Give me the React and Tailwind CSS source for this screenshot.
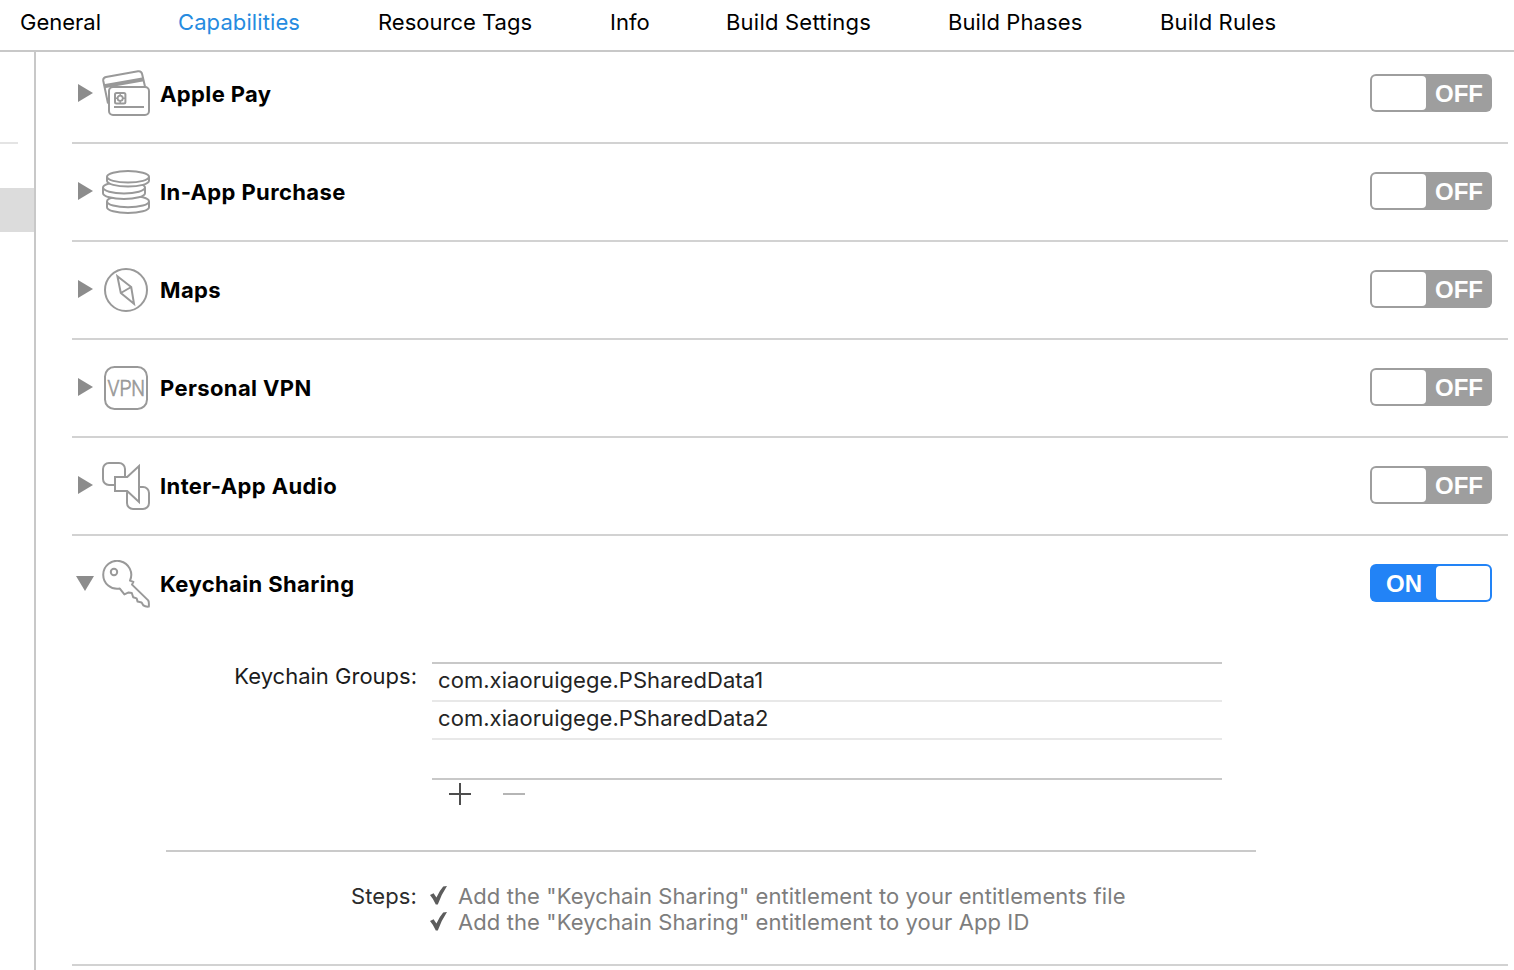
const tabs = [
  { label: "General", cls: "w-[158px] text-black" },
  { label: "Capabilities", cls: "w-[200px] text-[#268be0] tracking-[0.1px]" },
  { label: "Resource Tags", cls: "w-[232px] text-black" },
  { label: "Info", cls: "w-[116px] text-black" },
  { label: "Build Settings", cls: "w-[222px] text-black tracking-[0.22px]" },
  { label: "Build Phases", cls: "w-[212px] text-black tracking-[0.1px]" },
  { label: "Build Rules", cls: "w-[200px] text-black tracking-[0.15px]" },
];

function Icon({ children }) {
  return (
    <svg className="size-12 shrink-0" viewBox="0 0 48 48" fill="none" stroke="#999999" strokeWidth="2">
      {children}
    </svg>
  );
}

function CardsIcon() {
  return (
    <Icon>
      <path d="M6 33.5 L1.3 11 Q0.7 7.6 4 6.9 L36 1.3 Q39.4 0.8 40.1 4 L43 16.5" />
      <path d="M2 16.2 L41.8 9.2" strokeWidth="4" />
      <rect x="7" y="17" width="40" height="28" rx="4" fill="#fff" />
      <rect x="13" y="23" width="10.4" height="10.4" rx="1.5" />
      <circle cx="18.2" cy="28.2" r="2.6" strokeWidth="1.8" />
      <path d="M18.2 23v3M18.2 30.5v3M13 28.2h3M20.6 28.2h3" strokeWidth="1.4" />
      <path d="M12 37h30" />
    </Icon>
  );
}

function Coin({ cx, cy, depth }) {
  return (
    <g fill="#fff">
      <path d={`M${cx - 21} ${cy}v${depth}a21 5.8 0 0 0 42 0v${-depth}`} />
      <ellipse cx={cx} cy={cy} rx="21" ry="5.8" />
    </g>
  );
}

function CoinsIcon() {
  return (
    <Icon>
      <Coin cx={26} cy={33.4} depth={5.8} />
      <Coin cx={22} cy={19.6} depth={5.6} />
      <Coin cx={26} cy={8.8} depth={4} />
    </Icon>
  );
}

function CompassIcon() {
  return (
    <Icon>
      <circle cx="24" cy="24" r="21" />
      <path d="M15.4 10.2 L29.2 21 L32 37.8 L18.8 27 Z M18.8 27 L29.2 21" />
    </Icon>
  );
}

function VpnIcon() {
  return (
    <Icon>
      <rect x="3" y="3" width="42" height="42" rx="9.5" />
      <text
        x="5.5"
        y="32"
        textLength="37.5"
        lengthAdjust="spacingAndGlyphs"
        stroke="#999999"
        strokeWidth="0.7"
        fill="#999999"
        className="font-['Roboto',sans-serif] text-[22.5px] font-light"
      >
        VPN
      </text>
    </Icon>
  );
}

function AudioIcon() {
  return (
    <Icon>
      <rect x="1" y="1" width="22" height="22" rx="6" />
      <rect x="25" y="25" width="22" height="22" rx="6" />
      <path d="M13 15H25.2L37 4V40L25.2 29H13Z" fill="#fff" />
    </Icon>
  );
}

function KeyIcon() {
  return (
    <Icon>
      <path
        strokeLinejoin="round"
        d="M28 20.6 L31.4 21.9 L30 24.6 L46.2 40.4 Q47.2 42 46.8 46.6 Q43.5 47 41.4 45.4 L39.6 42.4 L35.6 41.6 L34.6 38.4 L31.2 37.2 L29.8 33 L26.6 32.4 L22.4 34.4 L17.8 28.6 A14 14 0 1 1 28 20.6 Z"
      />
      <circle cx="12" cy="12" r="3.2" />
    </Icon>
  );
}

function Disclosure({ open }) {
  return (
    <svg className="mb-0.5 h-[18px] w-[18px] shrink-0" viewBox="0 0 18 18" fill="#8c8c8c">
      {open ? <path d="M0 2h18L9 17z" /> : <path d="M2 0v18L17 9z" />}
    </svg>
  );
}

function Toggle({ on }) {
  return on ? (
    <div className="mb-0.5 flex h-[38px] w-[122px] items-center justify-between rounded-[6px] bg-[#2283f6] p-0.5 pl-4">
      <span className="pt-0.5 font-['Liberation_Sans',sans-serif] text-[24px] font-bold leading-none text-white">ON</span>
      <span className="h-[34px] w-[54px] rounded-[4px] bg-white" />
    </div>
  ) : (
    <div className="mb-0.5 flex h-[38px] w-[122px] items-center justify-between rounded-[6px] bg-[#9e9e9e] p-0.5 pr-[9px]">
      <span className="h-[34px] w-[54px] rounded-[4px] bg-white" />
      <span className="pt-0.5 font-['Liberation_Sans',sans-serif] text-[24px] font-bold leading-none text-white">OFF</span>
    </div>
  );
}

function CapabilityHeader({ icon, title, on }) {
  return (
    <div className="flex h-24 items-center pl-1 pr-4">
      <Disclosure open={on} />
      <div className="ml-2">{icon}</div>
      <h2 className="ml-2.5 flex-1 text-[22px] font-bold leading-none tracking-[0.38px] text-black">{title}</h2>
      <Toggle on={on} />
    </div>
  );
}

const capabilities = [
  { title: "Apple Pay", icon: <CardsIcon /> },
  { title: "In-App Purchase", icon: <CoinsIcon /> },
  { title: "Maps", icon: <CompassIcon /> },
  { title: "Personal VPN", icon: <VpnIcon /> },
  { title: "Inter-App Audio", icon: <AudioIcon /> },
];

function Step({ children }) {
  return (
    <li className="flex h-[26px] items-center">
      <svg className="mb-px mr-[11px] h-[19px] w-[17px]" viewBox="0 0 17 19" fill="#5c5c5c">
        <path d="M0 9 L3.6 7.2 L6.4 11.4 Q9.4 5 13.2 0.6 L17 0 Q11.6 8 7.8 18.5 L5.8 18.5 Q3.5 13 0 9Z" />
      </svg>
      <span>{children}</span>
    </li>
  );
}

function KeychainPanel() {
  return (
    <div className="h-[332px] pt-[30px]">
      <div className="flex">
        <div className="w-[345px] pt-px text-right leading-[26px] text-[#1c1c1c]">Keychain Groups:</div>
        <div className="ml-[15px] w-[790px]">
          <ul className="h-[118px] border-y-2 border-[#c8c8c8] tracking-[0.06px] text-[#242424]">
            <li className="flex h-[38px] items-center border-b-2 border-[#e8e8e8] pb-1 pl-1.5">com.xiaoruigege.PSharedData1</li>
            <li className="flex h-[38px] items-center border-b-2 border-[#e8e8e8] pb-1 pl-1.5">com.xiaoruigege.PSharedData2</li>
          </ul>
          <div className="flex gap-8 pl-[17px] pt-[3px]">
            <svg className="size-[22px]" viewBox="0 0 22 22" stroke="#4d4d4d" strokeWidth="2">
              <path d="M11 0v22M0 11h22" />
            </svg>
            <svg className="size-[22px]" viewBox="0 0 22 22" stroke="#b5b5b5" strokeWidth="2">
              <path d="M0 11h22" />
            </svg>
          </div>
        </div>
      </div>
      <div className="ml-[94px] mt-[45px] h-0.5 w-[1090px] bg-[#cacaca]" />
      <div className="mt-[31px] flex">
        <div className="w-[345px] text-right leading-[26px] tracking-[0.12px] text-[#2c2c2c]">Steps:</div>
        <ul className="ml-[13px] tracking-[0.1px] text-[#7d7d7d]">
          <Step>Add the "Keychain Sharing" entitlement to your entitlements file</Step>
          <Step>Add the "Keychain Sharing" entitlement to your App ID</Step>
        </ul>
      </div>
    </div>
  );
}

export default function App() {
  return (
    <div className="flex h-[970px] w-[1514px] flex-col overflow-hidden bg-white font-['Inter',sans-serif] text-[22px] leading-none">
      <nav className="flex h-[52px] shrink-0 border-b-2 border-[#c8c8c8] pl-5 pt-[11px]">
        {tabs.map((t) => (
          <span key={t.label} className={`${t.cls} shrink-0 whitespace-nowrap`}>
            {t.label}
          </span>
        ))}
      </nav>
      <div className="flex min-h-0 flex-1">
        <aside className="w-9 shrink-0 border-r-2 border-[#c8c8c8]">
          <div className="mt-[90px] h-0.5 w-[18px] bg-[#e4e4e4]" />
          <div className="mt-11 h-11 bg-[#dcdcdc]" />
        </aside>
        <main className="flex-1 overflow-hidden pl-9 pr-1.5">
          <div className="-mt-1.5">
            {capabilities.map((c) => (
              <section key={c.title} className="border-b-2 border-[#d2d2d2]">
                <CapabilityHeader {...c} on={false} />
              </section>
            ))}
            <section className="border-b-2 border-[#d2d2d2]">
              <CapabilityHeader title="Keychain Sharing" icon={<KeyIcon />} on />
              <KeychainPanel />
            </section>
          </div>
        </main>
      </div>
    </div>
  );
}
